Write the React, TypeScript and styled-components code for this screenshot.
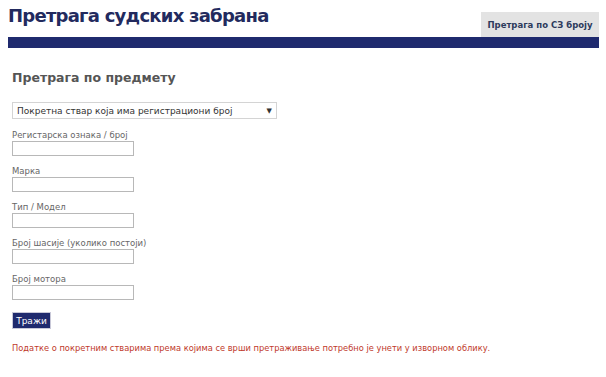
import styled, { createGlobalStyle } from 'styled-components';

const GlobalStyle = createGlobalStyle`
  html, body {
    margin: 0;
    padding: 0;
    background: #ffffff;
  }
  body {
    font-family: 'DejaVu Sans', Verdana, sans-serif;
  }
`;

const Page = styled.div`
  width: 591px;
  padding: 0 0 0 8px;
`;

const Header = styled.div`
  display: flex;
  justify-content: space-between;
  align-items: flex-end;
  height: 37px;
`;

const Title = styled.h1`
  margin: 0;
  align-self: flex-start;
  padding-top: 5px;
  font-size: 18px;
  font-weight: bold;
  color: #222a5e;
  letter-spacing: -0.75px;
`;

const Tab = styled.div`
  display: flex;
  align-items: center;
  justify-content: center;
  width: 118px;
  height: 25px;
  background: #e3e3e3;
  font-size: 8.5px;
  font-weight: bold;
  color: #2d3a5c;
`;

const Bar = styled.div`
  height: 11px;
  background: #1f2a6e;
`;

const Content = styled.div`
  padding: 22px 0 0 4px;
`;

const SectionTitle = styled.h2`
  margin: 0 0 17px;
  font-size: 12.5px;
  font-weight: bold;
  color: #555555;
`;

const SelectBox = styled.div`
  display: flex;
  align-items: center;
  justify-content: space-between;
  width: 265px;
  height: 17px;
  box-sizing: border-box;
  padding: 0 4px 0 4px;
  border: 1px solid #d4d4d4;
  font-size: 9px;
  color: #333333;
  margin: 1px 0 11px;
`;

const Arrow = styled.span`
  font-size: 7px;
  color: #333333;
`;

const Field = styled.div`
  display: flex;
  flex-direction: column;
  margin-bottom: 10px;
`;

const Label = styled.label`
  font-size: 8.5px;
  color: #666666;
  line-height: 11px;
`;

const Input = styled.input`
  display: block;
  width: 122px;
  height: 15px;
  margin: 0;
  padding: 0 2px;
  box-sizing: border-box;
  border: 1px solid #b8b8b8;
  border-radius: 0;
  background: #ffffff;
  font-size: 9px;
  outline: none;
`;

const Button = styled.button`
  display: block;
  margin-top: 12px;
  width: 39px;
  height: 17px;
  padding: 0;
  border: 1px solid #c8c8d8;
  background: #1f2a6e;
  color: #ffffff;
  font-family: 'DejaVu Sans', Verdana, sans-serif;
  font-size: 9px;
`;

const Note = styled.p`
  margin: 14px 0 0;
  font-size: 8.3px;
  color: #c0392b;
`;

const fields = [
  'Регистарска ознака / број',
  'Марка',
  'Тип / Модел',
  'Број шасије (уколико постоји)',
  'Број мотора',
];

export default function App() {
  return (
    <>
      <GlobalStyle />
      <Page>
        <Header>
          <Title>Претрага судских забрана</Title>
          <Tab>Претрага по СЗ броју</Tab>
        </Header>
        <Bar />
        <Content>
          <SectionTitle>Претрага по предмету</SectionTitle>
          <SelectBox>
            <span>Покретна ствар која има регистрациони број</span>
            <Arrow>▼</Arrow>
          </SelectBox>
          {fields.map(f => (
            <Field key={f}>
              <Label>{f}</Label>
              <Input type='text' />
            </Field>
          ))}
          <Button>Тражи</Button>
          <Note>
            Податке о покретним стварима према којима се врши претраживање потребно је унети у изворном облику.
          </Note>
        </Content>
      </Page>
    </>
  );
}
